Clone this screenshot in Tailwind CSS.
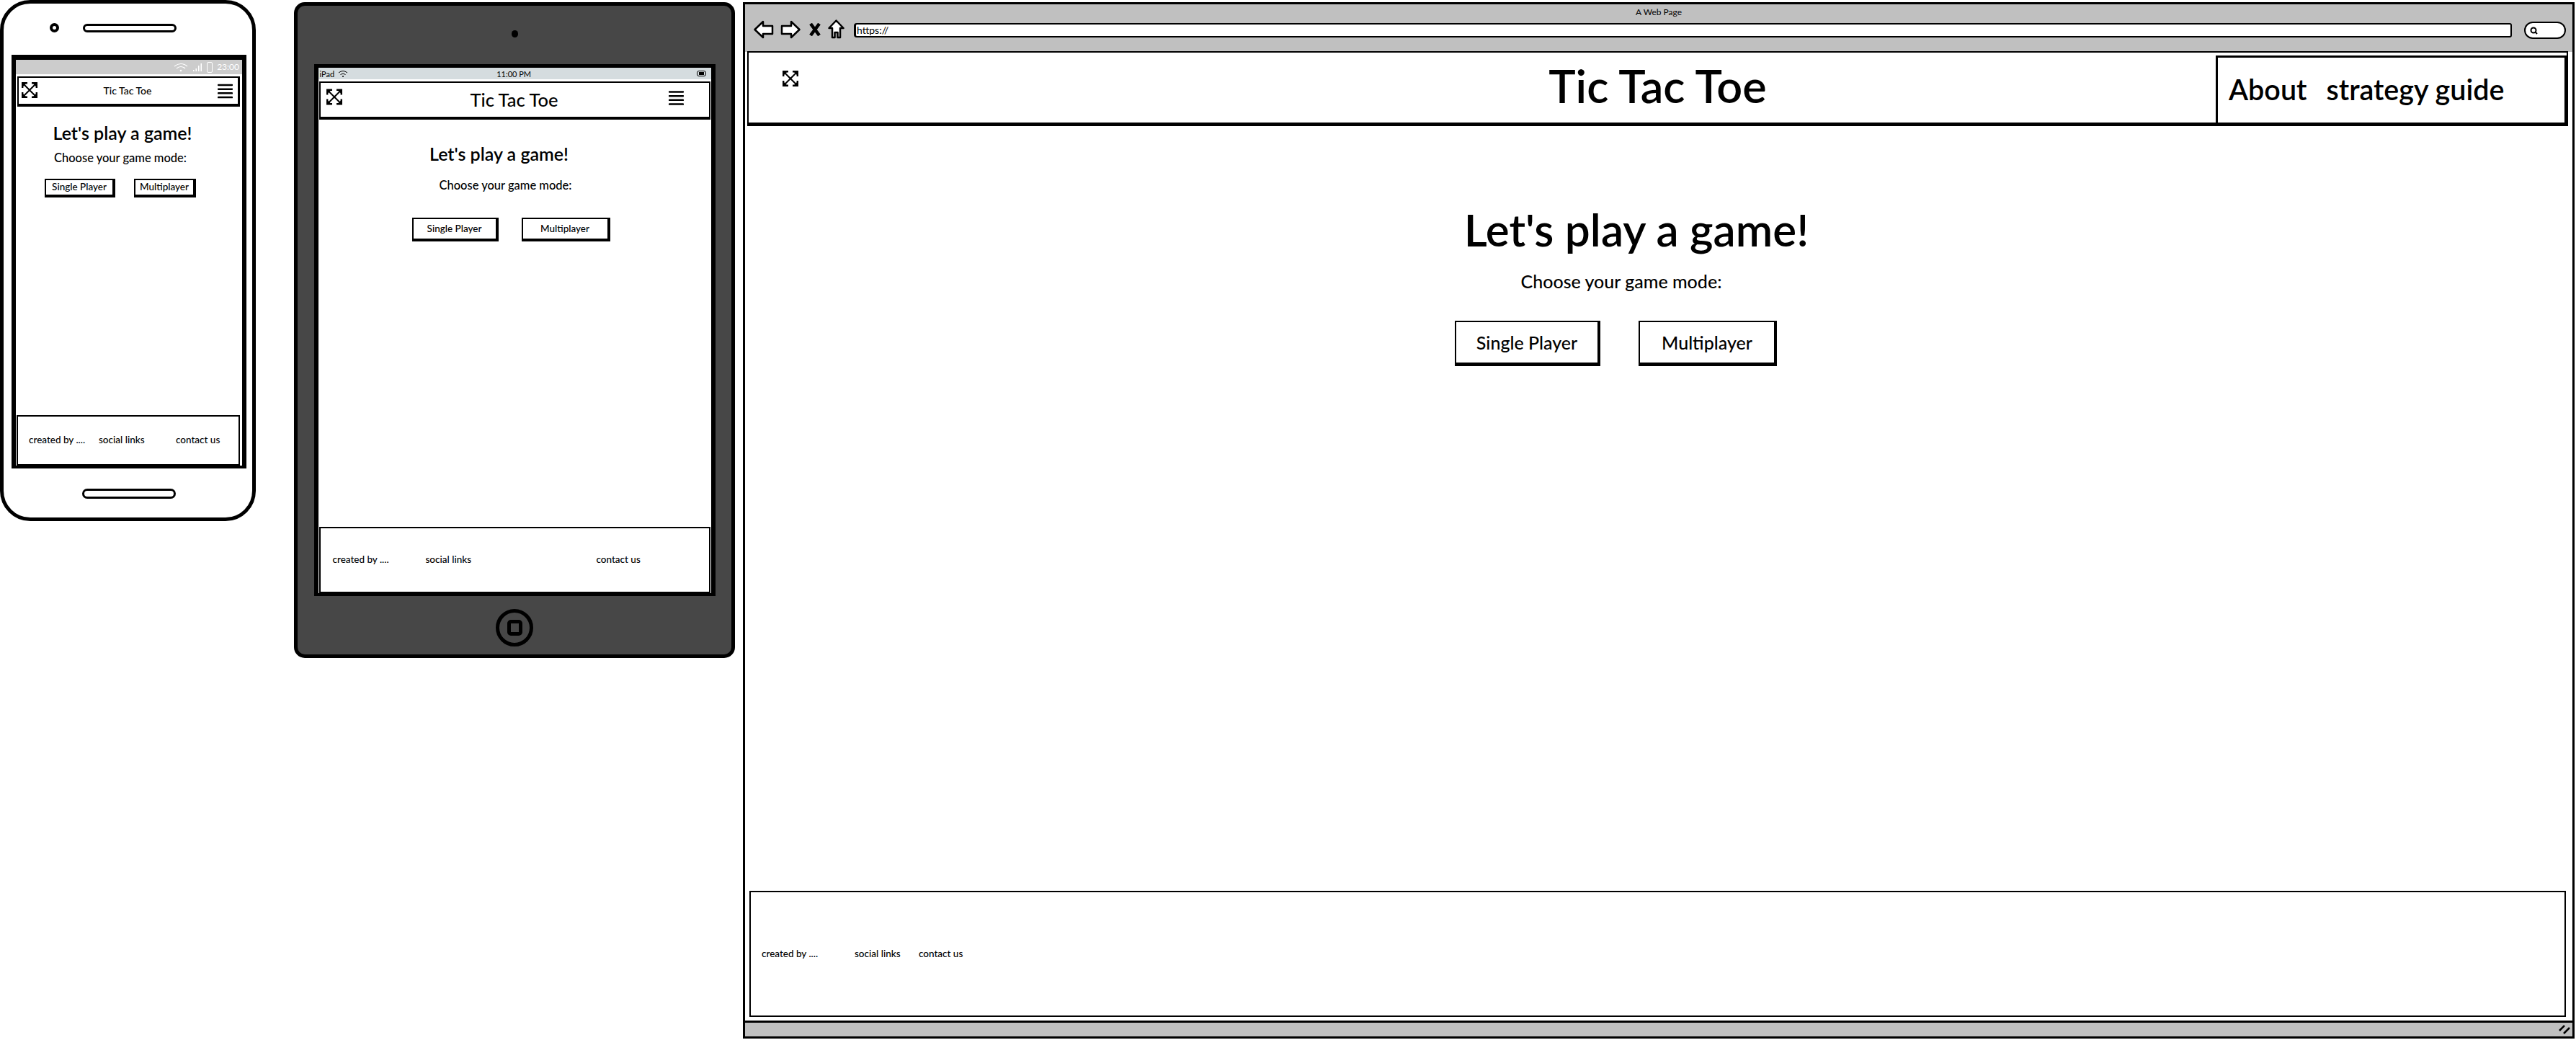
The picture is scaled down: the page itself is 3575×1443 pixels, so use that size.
<!DOCTYPE html>
<html lang="en">
<head>
  <meta charset="UTF-8">
  <title>Tic Tac Toe - Wireframes</title>
  <script src="https://cdn.jsdelivr.net/npm/@tailwindcss/browser@4"></script>
</head>
<body class="bg-white text-black font-['Lato',sans-serif] w-[3575px] h-[1443px] overflow-hidden">

  <svg class="hidden">
    <symbol id="expand" viewBox="0 0 22 22">
      <path d="M1.2 8V1.2H8M14 1.2H20.8V8M20.8 14V20.8H14M8 20.8H1.2V14" fill="none" stroke="#000" stroke-width="2.4"/>
      <path d="M3 3L19 19M19 3L3 19" fill="none" stroke="#000" stroke-width="2"/>
      <path d="M1 1H7L1 7ZM21 1H15L21 7ZM21 21H15L21 15ZM1 21H7L1 15Z" fill="#000"/>
    </symbol>
    <symbol id="burger" viewBox="0 0 22 22">
      <path d="M1 2H21M1 8H21M1 14H21M1 20H21" stroke="#000" stroke-width="2.6" stroke-linecap="round"/>
    </symbol>
  </svg>

  <div class="flex items-start">

    <!-- Phone -->
    <section class="w-[355px] h-[723px] shrink-0 flex flex-col border-[5px] border-black rounded-[42px] bg-white">
      <div class="flex items-center pl-[64px] pt-[27px] gap-[33px]">
        <div class="w-[13px] h-[13px] rounded-full border-[4px] border-black"></div>
        <div class="w-[130px] h-[12px] rounded-full border-[3px] border-black"></div>
      </div>
      <div class="mt-[31px] ml-[11px] mr-[8px] h-[574px] flex flex-col border-x-[6px] border-t-[7px] border-b-[4px] border-black">
        <div class="h-[20px] bg-[#cccccc] flex items-center justify-end pr-[4px] gap-[6px] text-white text-[12px] leading-none">
          <svg class="w-[20px] h-[13px]" viewBox="0 0 20 13" fill="none" stroke="#fff" stroke-width="1.2"><path d="M1 5Q10 -2 19 5M4 8Q10 3 16 8"/><circle cx="10" cy="11" r="1.3" fill="#fff" stroke="none"/></svg>
          <svg class="w-[14px] h-[12px]" viewBox="0 0 14 12" fill="#fff"><path d="M1 10h1.500v2H1zM4.500 8H6v4H4.500zM8 4h1.500v8H8zM11.500 1H13v11h-1.500z"/></svg>
          <div class="w-[8px] h-[15px] border border-white rounded-[2px]"></div>
          <span>23:00</span>
        </div>
        <nav class="mt-[3px] ml-[2px] mr-[3px] h-[42px] shrink-0 flex items-center justify-between px-[4px] border-[2px] border-b-[4px] border-r-[3px] border-black">
          <svg class="w-[22px] h-[22px] -mt-[3px]"><use href="#expand"/></svg>
          <span class="text-[14px] leading-none font-medium">Tic Tac Toe</span>
          <svg class="w-[21px] h-[21px] mr-[3px]"><use href="#burger"/></svg>
        </nav>
        <main class="flex-1 flex flex-col items-start">
          <h2 class="ml-[38px] mt-[21px] w-[220px] text-center text-[25px] leading-[30px] font-semibold">Let's play a game!</h2>
          <p class="ml-[41px] mt-[10px] w-[208px] text-center text-[16.500px] leading-[20px] font-medium">Choose your game mode:</p>
          <div class="ml-[40px] mt-[19px] flex gap-[26px]">
            <button class="w-[98px] h-[26px] text-[13.500px] leading-none border-[2px] border-r-[4px] border-b-[4px] border-black font-medium">Single Player</button>
            <button class="w-[86px] h-[26px] text-[13.500px] leading-none border-[2px] border-r-[4px] border-b-[4px] border-black font-medium">Multiplayer</button>
          </div>
        </main>
        <footer class="ml-[1px] mr-[3px] h-[70px] flex items-center border-[2px] border-black text-[13.500px] font-medium leading-none">
          <span class="ml-[15px] w-[97px]">created by ....</span>
          <span class="w-[107px]">social links</span>
          <span>contact us</span>
        </footer>
      </div>
      <div class="mt-[28px] ml-[109px] w-[130px] h-[14px] rounded-full border-[3px] border-black"></div>
    </section>

    <!-- Tablet -->
    <section class="ml-[53px] mt-[3px] w-[612px] h-[910px] shrink-0 flex flex-col items-center border-[5px] border-black rounded-[15px] bg-[#474747]">
      <div class="mt-[34px] w-[9px] h-[10px] rounded-full bg-black"></div>
      <div class="mt-[37px] w-[557px] h-[738px] flex flex-col border-x-[6px] border-t-[5px] border-b-[4px] border-black bg-white">
        <div class="h-[16px] bg-[#d5dcdf] flex items-center text-[11px] leading-none px-[2px]">
          <span>iPad</span>
          <svg class="ml-[5px] w-[14px] h-[11px]" viewBox="0 0 14 11" fill="none" stroke="#000" stroke-width="1"><path d="M1 4Q7 -1 13 4M3.500 6.500Q7 3.500 10.500 6.500"/><circle cx="7" cy="9" r="1" fill="#000" stroke="none"/></svg>
          <span class="ml-[206px]">11:00 PM</span>
          <div class="ml-auto mr-[5px] w-[13px] h-[8px] rounded-[3px] border border-black flex items-center pl-[2px]"><div class="w-[7px] h-[4px] bg-black"></div></div>
        </div>
        <nav class="mt-[3px] mx-[1px] h-[53px] shrink-0 flex items-center justify-between pl-[8px] pr-[33px] border-[2px] border-b-[4px] border-black">
          <svg class="w-[22px] h-[23px] -mt-[9px]"><use href="#expand"/></svg>
          <span class="text-[25.500px] leading-none ml-[24px] font-medium">Tic Tac Toe</span>
          <svg class="w-[21px] h-[22px] mr-[1px] -mt-[5px]"><use href="#burger"/></svg>
        </nav>
        <main class="flex-1 flex flex-col items-start">
          <h2 class="ml-[131px] mt-[32px] w-[240px] text-center text-[25px] leading-[30px] font-semibold">Let's play a game!</h2>
          <p class="ml-[140px] mt-[19px] w-[240px] text-center text-[16.500px] leading-[20px] font-medium">Choose your game mode:</p>
          <div class="ml-[130px] mt-[35px] flex gap-[32px]">
            <button class="w-[120px] h-[33px] text-[13.500px] leading-none border-[2px] border-r-[4px] border-b-[4px] border-black font-medium">Single Player</button>
            <button class="w-[123px] h-[33px] text-[13.500px] leading-none border-[2px] border-r-[4px] border-b-[4px] border-black font-medium">Multiplayer</button>
          </div>
        </main>
        <footer class="mx-[1px] h-[92px] flex items-center border-[2px] border-black text-[13.500px] font-medium leading-none">
          <span class="ml-[17px] w-[129px]">created by ....</span>
          <span class="w-[237px]">social links</span>
          <span>contact us</span>
        </footer>
      </div>
      <div class="mt-[18px] w-[52px] h-[52px] rounded-full border-[5px] border-black flex items-center justify-center">
        <div class="w-[21px] h-[22px] rounded-[5px] border-[5px] border-black"></div>
      </div>
    </section>

    <!-- Desktop browser -->
    <section class="ml-[11px] mt-[3px] w-[2542px] h-[1438px] shrink-0 flex flex-col border-[3px] border-black bg-white">
      <div class="h-[66px] shrink-0 bg-[#c0c0c0] flex flex-col">
        <div class="pt-[4px] text-center text-[12px] leading-[14px]">A Web Page</div>
        <div class="mt-[3px] flex items-center pl-[12px] pr-[9px]">
          <svg class="w-[28px] h-[26px]" viewBox="0 0 28 26" fill="#fff" stroke="#000" stroke-width="2.500" stroke-linejoin="round"><path d="M1.500 13L13 2V8H26V19H13V24Z"/></svg>
          <svg class="ml-[9px] w-[28px] h-[26px]" viewBox="0 0 28 26" fill="#fff" stroke="#000" stroke-width="2.500" stroke-linejoin="round"><path d="M26.500 13L15 2V8H2V19H15V24Z"/></svg>
          <svg class="ml-[12px] w-[16px] h-[18px]" viewBox="0 0 16 18" fill="none" stroke="#000" stroke-width="4.500"><path d="M2 1L14 17M14 1L2 17"/></svg>
          <svg class="ml-[10px] w-[23px] h-[27px]" viewBox="0 0 23 27" fill="#fff" stroke="#000" stroke-width="2.500" stroke-linejoin="round"><path d="M11.500 1.500L21.500 12H17V25H13.500V18H9.500V25H6V12H1.500Z"/></svg>
          <div class="ml-[13px] flex-1 h-[20px] flex items-center pl-[1px] mt-[3px] bg-white border-[2px] border-l-[3px] border-black rounded-l-[4px] rounded-r-[3px] text-[14px] leading-none">https://</div>
          <div class="ml-[17px] w-[58px] h-[24px] flex items-center pl-[6px] mt-[3px] bg-white border-[2px] border-black rounded-full">
            <svg class="w-[11px] h-[11px]" viewBox="0 0 11 11" fill="none" stroke="#000" stroke-width="2"><circle cx="5" cy="5" r="3.500"/><path d="M7.500 7.500L10 10"/></svg>
          </div>
        </div>
      </div>
      <nav class="ml-[3px] mr-[6px] h-[104px] shrink-0 grid grid-cols-[1fr_auto_1fr] border-[2px] border-b-[5px] border-black -mt-[1px] bg-white">
        <div><svg class="ml-[47px] mt-[25px] w-[22px] h-[22px]"><use href="#expand"/></svg></div>
        <h1 class="self-center -mt-[6px] text-[63px] leading-none font-semibold">Tic Tac Toe</h1>
        <div class="justify-self-end w-[487px] mt-[4px] -mb-[3px] flex items-center pl-[15px] pb-[3px] gap-[27px] border-[3px] border-black text-[39.500px] leading-none font-semibold">
          <span>About</span>
          <span>strategy guide</span>
        </div>
      </nav>
      <main class="flex-1 flex flex-col items-start">
        <h2 class="ml-[951px] mt-[108px] w-[572px] text-center text-[62px] leading-[70px] font-semibold">Let's play a game!</h2>
        <p class="ml-[1028px] mt-[22px] w-[376px] text-center text-[25px] leading-[30px] font-medium">Choose your game mode:</p>
        <div class="ml-[985px] mt-[40px] flex gap-[53px]">
          <button class="w-[202px] h-[63px] text-[25px] leading-none border-[2px] border-r-[4px] border-b-[5px] border-black font-medium">Single Player</button>
          <button class="w-[192px] h-[63px] text-[25px] leading-none border-[2px] border-r-[4px] border-b-[5px] border-black font-medium">Multiplayer</button>
        </div>
      </main>
      <footer class="ml-[6px] mr-[9px] h-[175px] shrink-0 flex items-center border-[2px] border-black text-[13.500px] font-medium leading-none">
        <span class="ml-[15px] w-[129px]">created by ....</span>
        <span class="w-[89px]">social links</span>
        <span>contact us</span>
      </footer>
      <div class="mt-[5px] h-[22px] shrink-0 bg-[#c0c0c0] border-t-[3px] border-black flex items-center justify-end pr-[3px]">
        <svg class="w-[16px] h-[13px]" viewBox="0 0 16 13" fill="none" stroke="#000" stroke-width="2.500"><path d="M1 8L8 1M7 12L15 4"/></svg>
      </div>
    </section>
  </div>
</body>
</html>
